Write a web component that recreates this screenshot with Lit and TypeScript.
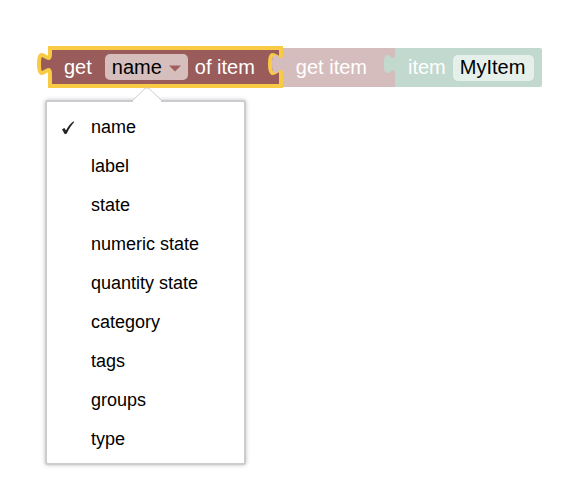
import {LitElement, css, html, svg} from 'lit';
import {customElement, property, state} from 'lit/decorators.js';

const ATTRIBUTES = [
  'name',
  'label',
  'state',
  'numeric state',
  'quantity state',
  'category',
  'tags',
  'groups',
  'type',
];

// Puzzle tab outline, drawn from the bottom of the neck to the top.
const TAB = 'c0-13-11 11-11-10s11 3 11-10';

@customElement('workspace-block')
export class WorkspaceBlock extends LitElement {
  @property({reflect: true}) kind = 'item';
  @property({type: Boolean, reflect: true}) selected = false;
  // True when the block is plugged into a selected block.
  @property({type: Boolean}) plugged = false;

  static get styles() {
    return [
      css`
        :host {
          --block: #c1d9ce;
          background: var(--block);
          border-radius: 0 2px 2px 0;
          box-sizing: border-box;
          color: #fff;
          display: block;
          margin-top: 2px;
          min-height: 39px;
          position: relative;
        }
        :host([kind='get']) {
          --block: #d6bdbd;
          border-radius: 0;
        }
        :host([selected]) {
          --block: #995c5b;
          border: 4px solid #f9cb45;
          border-radius: 0;
          margin-top: 0;
          min-height: 42px;
        }
        .content {
          align-items: center;
          display: flex;
          min-height: 39px;
          white-space: nowrap;
        }
        :host([selected]) .content {
          min-height: 34px;
        }
        .tab {
          height: 38px;
          left: -14px;
          overflow: visible;
          pointer-events: none;
          position: absolute;
          top: 0;
          width: 16px;
        }
        :host([selected]) .tab {
          left: -18px;
          top: -4px;
        }
        .fill {
          fill: var(--block);
        }
        .outline {
          fill: none;
          stroke: #f9cb45;
          stroke-width: 4;
        }
      `,
    ];
  }

  renderTab() {
    if (this.selected) {
      return svg`
        <path class="fill" d="M16 28${TAB}h3v20z"></path>
        <path class="fill" d="M13 14h6v10h-6z"></path>
        <path class="outline" d="M16 32V28${TAB}V4"></path>
      `;
    }
    return svg`
      ${this.plugged
        ? svg`<path class="outline" d="M12 30V26${TAB}V2"></path>`
        : ''}
      <path class="fill" d="M14 26${TAB}h2v20z"></path>
    `;
  }

  render() {
    return html`
      <svg class="tab" viewBox="0 0 16 38" aria-hidden="true">
        ${this.renderTab()}
      </svg>
      <div class="content"><slot></slot></div>
    `;
  }
}

@customElement('app-root')
export class AppRoot extends LitElement {
  @state() private attribute = 'name';

  static get styles() {
    return [
      css`
        :host {
          background: #fff;
          box-sizing: border-box;
          display: block;
          font-family: 'Liberation Sans', Arial, Helvetica, sans-serif;
          font-size: 20px;
          min-height: 100vh;
          padding: 46px 24px 24px 45px;
        }
        .blocks {
          align-items: flex-start;
          display: flex;
          margin-left: 3px;
        }
        .inputs {
          align-items: center;
          display: flex;
        }
        .inputs--attribute {
          padding: 0 24px 0 12px;
        }
        .inputs--get {
          padding: 0 28px 0 13px;
        }
        .inputs--item {
          gap: 7px;
          padding: 0 8px 0 13px;
        }
        .picker {
          margin: 0 7px 0 13px;
          position: relative;
        }
        .picker__select,
        .item-name {
          appearance: none;
          border: 0;
          border-radius: 5px;
          box-sizing: border-box;
          color: #000;
          display: block;
          font: inherit;
          height: 26px;
          margin: 0;
          outline: 0;
          padding: 0 7px;
        }
        .picker__select {
          background: #d6bebd;
          width: 83px;
        }
        .picker__arrow {
          height: 7px;
          pointer-events: none;
          position: absolute;
          right: 7px;
          top: 11px;
          width: 12px;
        }
        .item-name {
          background: #e6f0eb;
          width: 81px;
        }
        .menu {
          background: #fff;
          border: 2px solid #ccccd0;
          border-radius: 3px;
          box-shadow: 0 0 4px #00000040;
          box-sizing: border-box;
          margin-top: 12px;
          padding: 6px 0 4px;
          position: relative;
          width: 201px;
        }
        .menu__arrow {
          height: 15px;
          left: 85px;
          position: absolute;
          top: -15px;
          width: 30px;
        }
        .menu__item {
          align-items: center;
          background: none;
          border: 0;
          color: #000;
          display: flex;
          font: inherit;
          font-size: 18px;
          gap: 16px;
          line-height: 39px;
          margin: 0;
          padding: 0 14px;
          width: 100%;
        }
        .menu__item:hover {
          background: #f3f3f3;
        }
        .menu__check {
          height: 14px;
          width: 14px;
        }
      `,
    ];
  }

  onSelect(e: Event) {
    this.attribute = (e.target as HTMLSelectElement).value;
  }

  renderMenuItem(name: string) {
    const checked = name === this.attribute;
    return html`
      <button
        class="menu__item"
        role="option"
        aria-selected=${checked}
        @click=${() => (this.attribute = name)}
      >
        <svg class="menu__check" viewBox="0 0 14 14" aria-hidden="true">
          ${checked
            ? svg`<path fill="#222" d="M1 8.300 3.400 7 5 9.600C7 6 9.500 2.500 12.200.600L13.400.800C10.300 4.400 7.800 8 5.800 12.600L3.800 13.200Z"></path>`
            : ''}
        </svg>
        ${name}
      </button>
    `;
  }

  render() {
    return html`
      <div class="blocks">
        <workspace-block kind="attribute" selected>
          <div class="inputs inputs--attribute">
            <label for="attribute">get</label>
            <div class="picker">
              <select
                class="picker__select"
                id="attribute"
                .value=${this.attribute}
                @change=${this.onSelect}
              >
                ${ATTRIBUTES.map(
                  (name) => html`
                    <option ?selected=${name === this.attribute}>${name}</option>
                  `
                )}
              </select>
              <svg class="picker__arrow" viewBox="0 0 12 7" aria-hidden="true">
                <path fill="#a35f5d" d="M0 .5h12L6 6.500z"></path>
              </svg>
            </div>
            <span>of item</span>
          </div>
        </workspace-block>
        <workspace-block kind="get" plugged>
          <div class="inputs inputs--get">get item</div>
        </workspace-block>
        <workspace-block kind="item">
          <div class="inputs inputs--item">
            <label for="item">item</label>
            <input class="item-name" id="item" value="MyItem" />
          </div>
        </workspace-block>
      </div>
      <div class="menu" role="listbox" aria-label="Attribute">
        <svg class="menu__arrow" viewBox="0 0 30 15" aria-hidden="true">
          <path
            fill="#fff"
            stroke="#ccccd0"
            d="M0 14 13 1.500Q15 0 17 1.500L30 14"
          ></path>
          <path fill="#fff" d="M1 13.500h28V15H1z"></path>
        </svg>
        ${ATTRIBUTES.map((name) => this.renderMenuItem(name))}
      </div>
    `;
  }
}
